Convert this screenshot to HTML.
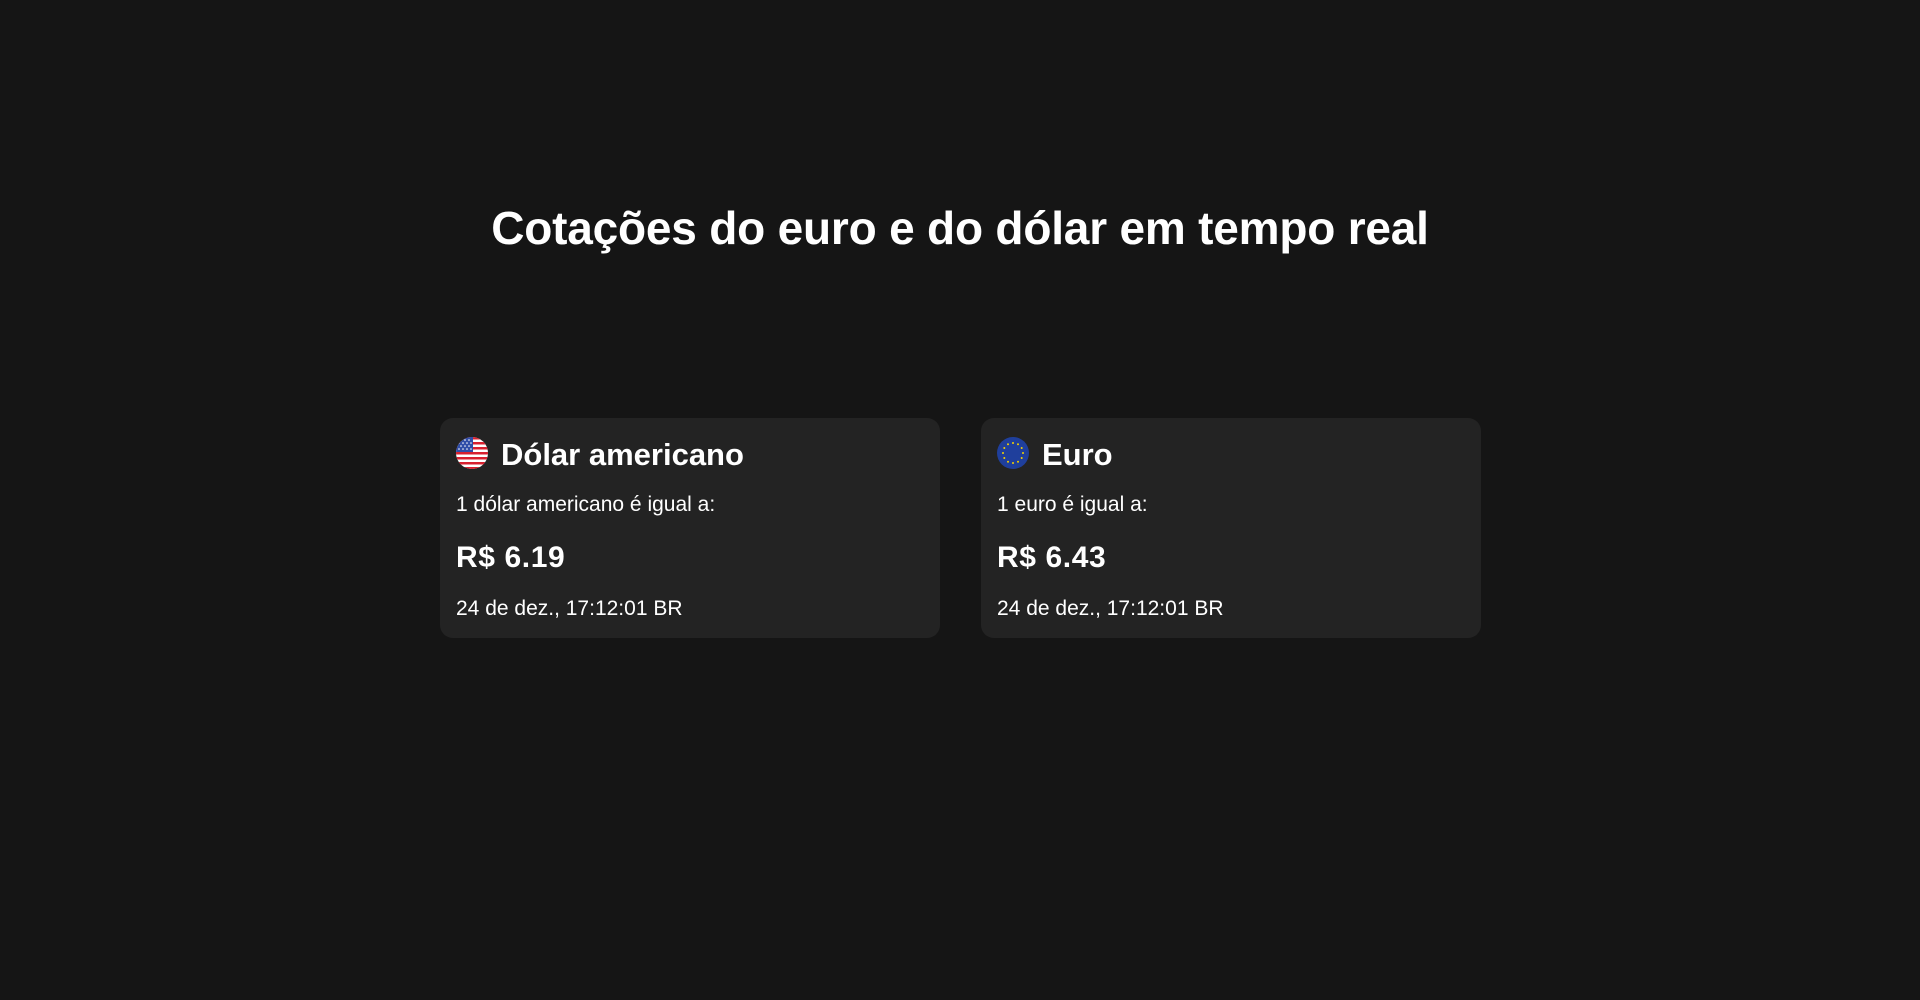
<!DOCTYPE html>
<html><head><meta charset="utf-8"><style>
html,body{margin:0;padding:0;background:#151515;width:1920px;height:1000px;overflow:hidden;font-family:"Liberation Sans",Arial,sans-serif;color:#fff}
h1{position:absolute;left:0;width:1920px;top:198px;margin:0;text-align:center;font-size:46px;font-weight:bold;letter-spacing:-0.2px;line-height:60px}
.card{position:absolute;top:418px;width:500px;height:220px;background:#232323;border-radius:13px}
.flag{position:absolute;left:16px;top:19px;width:32px;height:32px}
.t{position:absolute;left:61px;top:18px;font-size:31px;font-weight:bold;letter-spacing:0;line-height:38px}
.s{position:absolute;left:16px;top:75px;font-size:21px;letter-spacing:0;line-height:24px}
.p{position:absolute;left:16px;top:122px;font-size:30px;font-weight:bold;letter-spacing:0.6px;line-height:36px}
.d{position:absolute;left:16px;top:179px;font-size:21px;letter-spacing:0;line-height:24px}
</style></head><body>
<h1>Cotações do euro e do dólar em tempo real</h1>
<div class="card" style="left:440px">
<svg class="flag" viewBox="0 0 32 32"><defs><clipPath id="c"><circle cx="16" cy="16" r="16"/></clipPath></defs>
<g clip-path="url(#c)"><rect width="32" height="32" fill="#fff"/>
<rect y="0" width="32" height="2.5" fill="#d8202f"/><rect y="5" width="32" height="2.5" fill="#d8202f"/><rect y="10" width="32" height="2.5" fill="#d8202f"/><rect y="15" width="32" height="2.5" fill="#d8202f"/><rect y="20" width="32" height="2.5" fill="#d8202f"/><rect y="25" width="32" height="2.5" fill="#d8202f"/><rect y="30" width="32" height="2.5" fill="#d8202f"/>
<rect width="17" height="15" fill="#2f4ea8"/>
<g fill="#fff"><circle cx="5" cy="3" r=".8"/><circle cx="9" cy="3" r=".8"/><circle cx="13" cy="3" r=".8"/><circle cx="3" cy="6" r=".8"/><circle cx="7" cy="6" r=".8"/><circle cx="11" cy="6" r=".8"/><circle cx="15" cy="6" r=".8"/><circle cx="5" cy="9" r=".8"/><circle cx="9" cy="9" r=".8"/><circle cx="13" cy="9" r=".8"/><circle cx="3" cy="12" r=".8"/><circle cx="7" cy="12" r=".8"/><circle cx="11" cy="12" r=".8"/><circle cx="15" cy="12" r=".8"/></g></g></svg>
<div class="t">Dólar americano</div>
<div class="s">1 dólar americano é igual a:</div>
<div class="p">R$ 6.19</div>
<div class="d">24 de dez., 17:12:01 BR</div>
</div>
<div class="card" style="left:981px">
<svg class="flag" viewBox="0 0 32 32"><circle cx="16" cy="16" r="16" fill="#1f3f9c"/>
<g fill="#f5d200"><circle cx="16" cy="6" r="1"/><circle cx="21" cy="7.3" r="1"/><circle cx="24.7" cy="11" r="1"/><circle cx="26" cy="16" r="1"/><circle cx="24.7" cy="21" r="1"/><circle cx="21" cy="24.7" r="1"/><circle cx="16" cy="26" r="1"/><circle cx="11" cy="24.7" r="1"/><circle cx="7.3" cy="21" r="1"/><circle cx="6" cy="16" r="1"/><circle cx="7.3" cy="11" r="1"/><circle cx="11" cy="7.3" r="1"/></g></svg>
<div class="t">Euro</div>
<div class="s">1 euro é igual a:</div>
<div class="p">R$ 6.43</div>
<div class="d">24 de dez., 17:12:01 BR</div>
</div>
</body></html>
